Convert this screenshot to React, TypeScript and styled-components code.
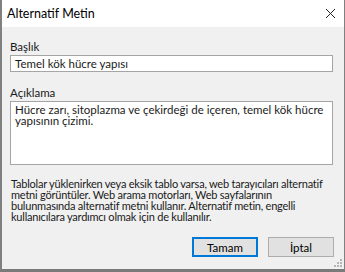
import styled, { createGlobalStyle } from "styled-components";

const GlobalStyle = createGlobalStyle`
  body {
    margin: 0;
    background: #ffffff;
  }
`;

const Dialog = styled.div`
  position: relative;
  box-sizing: border-box;
  width: 345px;
  height: 272px;
  display: flex;
  flex-direction: column;
  background: #f0f0f0;
  border-left: 2px solid #808080;
  border-right: 1px solid #808080;
  border-bottom: 3px solid #7a7a7a;
  font-family: Lato, "Open Sans", sans-serif;
  color: #1a1a1a;
`;

const TitleBar = styled.div`
  height: 27px;
  flex-shrink: 0;
  display: flex;
  align-items: center;
  justify-content: space-between;
  background: #ffffff;
  padding: 0 7px 0 5px;
`;

const Title = styled.span`
  font-size: 12.5px;
  color: #000;
`;

const CloseButton = styled.button`
  border: none;
  background: transparent;
  padding: 0;
  width: 14px;
  height: 14px;
  display: flex;
  align-items: center;
  justify-content: center;
  cursor: pointer;
`;

const Body = styled.div`
  flex: 1;
  display: flex;
  flex-direction: column;
  padding: 13px 10px 0 8px;
`;

const Label = styled.label`
  font-size: 11.5px;
  line-height: 14px;
  margin-bottom: 1px;
`;

const TextBox = styled.div<{ $height: number }>`
  box-sizing: border-box;
  width: 323px;
  height: ${(p) => p.$height}px;
  background: #fff;
  border: 1px solid #a5a5a5;
  padding: 2px 4px;
  font-size: 11.5px;
  line-height: 11px;
  margin-bottom: ${(p) => (p.$height > 30 ? 13 : 14)}px;
`;

const SingleLine = styled.span`
  line-height: 12px;
`;

const Help = styled.p`
  margin: 0 0 0 1px;
  font-size: 11px;
  letter-spacing: -0.22px;
  line-height: 11px;
  white-space: nowrap;
`;

const Buttons = styled.div`
  margin-top: auto;
  margin-bottom: 12px;
  display: flex;
  justify-content: flex-end;
  gap: 10px;
`;

const Button = styled.button<{ $primary?: boolean }>`
  box-sizing: border-box;
  width: 66px;
  height: 20px;
  padding: 0;
  font-family: inherit;
  font-size: 11.5px;
  color: #000;
  background: #e1e1e1;
  border: ${(p) => (p.$primary ? "2px solid #0078d7" : "1px solid #adadad")};
`;

const Grip = styled.svg`
  position: absolute;
  right: 1px;
  bottom: 1px;
`;

export default function App() {
  return (
    <>
      <GlobalStyle />
      <Dialog>
        <TitleBar>
          <Title>Alternatif Metin</Title>
          <CloseButton aria-label="Kapat">
            <svg width="11" height="11" viewBox="0 0 11 11">
              <path d="M1 1 10 10M10 1 1 10" stroke="#222" strokeWidth="1" />
            </svg>
          </CloseButton>
        </TitleBar>
        <Body>
          <Label>Başlık</Label>
          <TextBox $height={17}>
            <SingleLine>Temel kök hücre yapısı</SingleLine>
          </TextBox>
          <Label>Açıklama</Label>
          <TextBox $height={64}>
            Hücre zarı, sitoplazma ve çekirdeği de içeren, temel kök hücre
            yapısının çizimi.
          </TextBox>
          <Help>
            Tablolar yüklenirken veya eksik tablo varsa, web tarayıcıları alternatif
            <br />
            metni görüntüler. Web arama motorları, Web sayfalarının
            <br />
            bulunmasında alternatif metni kullanır. Alternatif metin, engelli
            <br />
            kullanıcılara yardımcı olmak için de kullanılır.
          </Help>
          <Buttons>
            <Button $primary>Tamam</Button>
            <Button>İptal</Button>
          </Buttons>
        </Body>
        <Grip width="10" height="10" viewBox="0 0 10 10">
          <g fill="#b5b5b5">
            <rect x="7" y="1" width="2" height="2" />
            <rect x="4" y="4" width="2" height="2" />
            <rect x="7" y="4" width="2" height="2" />
            <rect x="1" y="7" width="2" height="2" />
            <rect x="4" y="7" width="2" height="2" />
            <rect x="7" y="7" width="2" height="2" />
          </g>
        </Grip>
      </Dialog>
    </>
  );
}
